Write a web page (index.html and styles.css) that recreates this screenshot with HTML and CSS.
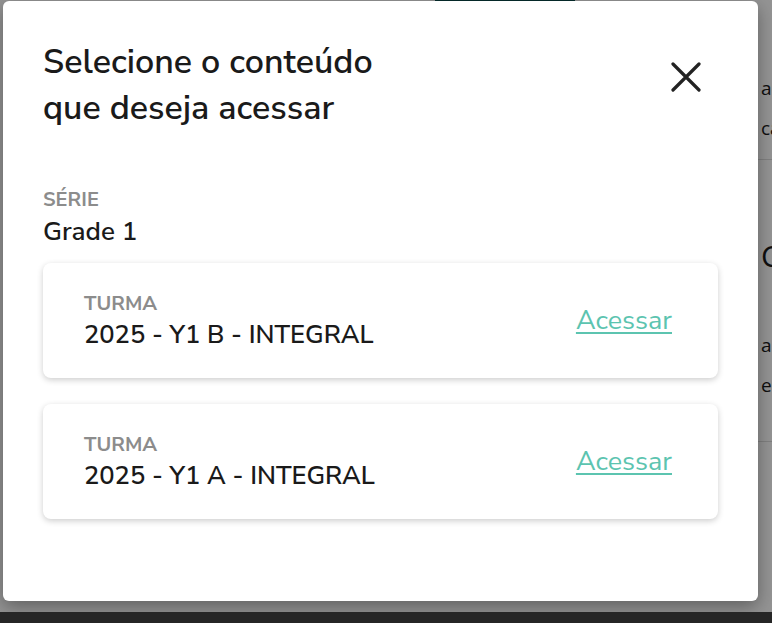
FILE: index.html
```html
<!DOCTYPE html>
<html lang="pt-BR">
<head>
    <meta charset="UTF-8">
    <meta name="viewport" content="width=device-width, initial-scale=1.0">
    <title>Selecione o conteúdo</title>
    <link rel="stylesheet" href="styles.css">
</head>
<body>

<div class="stage">
    <!-- página por trás do modal -->
    <div class="page">
        <div class="page-main">
            <div class="page-top">
                <span class="top-button"></span>
            </div>
        </div>
        <div class="page-side">
            <div class="side-block">
                <p class="side-text side-first">ações</p>
                <p class="side-text">carga</p>
            </div>
            <div class="side-block side-block-alt">
                <p class="side-big">Conteúdo</p>
                <p class="side-text">aulas</p>
                <p class="side-text">estudos</p>
            </div>
        </div>
    </div>

    <div class="overlay">
        <div class="modal">
            <div class="modal-header">
                <h2>Selecione o conteúdo<br>que deseja acessar</h2>
                <button class="close" aria-label="Fechar">
                    <svg width="30" height="30" viewBox="0 0 30 30">
                        <path d="M2 2 L28 28 M28 2 L2 28" stroke="#222" stroke-width="3.2" stroke-linecap="round"/>
                    </svg>
                </button>
            </div>

            <div class="serie">
                <span class="label">SÉRIE</span>
                <span class="serie-name">Grade 1</span>
            </div>

            <div class="turmas">
                <div class="turma-card">
                    <div class="turma-info">
                        <span class="label">TURMA</span>
                        <span class="turma-name">2025 - Y1 B - INTEGRAL</span>
                    </div>
                    <a href="#" class="acessar">Acessar</a>
                </div>
                <div class="turma-card">
                    <div class="turma-info">
                        <span class="label">TURMA</span>
                        <span class="turma-name">2025 - Y1 A - INTEGRAL</span>
                    </div>
                    <a href="#" class="acessar">Acessar</a>
                </div>
            </div>
        </div>
    </div>
</div>

<div class="taskbar"></div>

</body>
</html>
```

FILE: styles.css
```css
body {
    margin: 0;
    font-family: "Nunito Sans", Lato, "Open Sans", sans-serif;
    color: #1a1a1a;
    background-color: #262626;
}
.stage {
    position: relative;
    height: 612px;
    background-color: #fff;
    overflow: hidden;
}
.page {
    display: flex;
    height: 100%;
}
.page-main {
    width: 758px;
    flex-shrink: 0;
}
.page-top {
    display: flex;
    height: 3px;
}
.top-button {
    margin-left: 435px;
    width: 140px;
    height: 3px;
    background-color: #0b4d4d;
}
.page-side {
    flex: 1;
    min-width: 0;
    display: flex;
    flex-direction: column;
    font-family: "Open Sans", sans-serif;
}
.side-block {
    height: 160px;
    padding-left: 3px;
    border-bottom: 1px solid #ddd;
    box-sizing: border-box;
}
.side-block-alt {
    height: 282px;
    padding-top: 78px;
}
.side-block p {
    margin: 0;
    white-space: nowrap;
}
.side-text {
    font-size: 19px;
    line-height: 40px;
}
.side-first {
    padding-top: 68px;
}
.side-big {
    font-size: 30px;
    line-height: 36px;
    margin-bottom: 51px !important;
}
.overlay {
    position: absolute;
    inset: 0;
    background-color: rgba(0, 0, 0, 0.42);
    padding: 1px 0 0 3px;
}
.modal {
    width: 755px;
    height: 600px;
    box-sizing: border-box;
    padding: 38px 40px 0;
    background-color: #fff;
    border-radius: 6px;
    box-shadow: 0 6px 18px rgba(0, 0, 0, 0.35);
}
.modal-header {
    display: flex;
    justify-content: space-between;
    align-items: flex-start;
}
.modal-header h2 {
    margin: 0;
    font-size: 34px;
    font-weight: 600;
    line-height: 46px;
}
.close {
    margin: 23px 17px 0 0;
    padding: 0;
    border: none;
    background: none;
    cursor: pointer;
}
.serie {
    display: flex;
    flex-direction: column;
    margin-top: 56px;
}
.label {
    font-size: 20px;
    font-weight: 700;
    color: #8c8c8c;
    line-height: 26px;
}
.serie-name {
    font-size: 26px;
    font-weight: 600;
    line-height: 38px;
}
.turmas {
    display: flex;
    flex-direction: column;
    gap: 26px;
    margin-top: 12px;
}
.turma-card {
    display: flex;
    align-items: center;
    justify-content: space-between;
    height: 115px;
    box-sizing: border-box;
    padding: 0 46px 0 41px;
    border-radius: 8px;
    box-shadow: 0 2px 6px rgba(0, 0, 0, 0.2);
}
.turma-info {
    display: flex;
    flex-direction: column;
    gap: 3px;
}
.turma-name {
    font-size: 25.5px;
    font-weight: 600;
    line-height: 30px;
}
.acessar {
    font-size: 27px;
    color: #5cc4b0;
    text-underline-offset: 3px;
}
.taskbar {
    height: 11px;
    background-color: #262626;
}
```
